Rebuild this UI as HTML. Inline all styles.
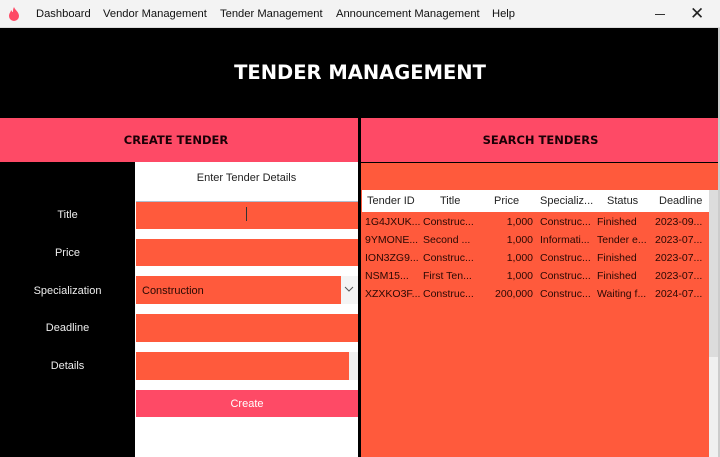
<!DOCTYPE html>
<html><head><style>
*{margin:0;padding:0;box-sizing:border-box}
body{width:720px;height:457px;position:relative;overflow:hidden;background:#000;font-family:"Liberation Sans",sans-serif;font-size:11px}
.a{position:absolute}
.or{background:#ff5a3c}
.pk{background:#fe4a66}
.lbl{position:absolute;left:0;width:135px;text-align:center;color:#eee;font-size:11px}
.row{position:absolute;left:362px;height:18px;width:347px;font-size:10.5px;color:#2a0803}
.row span,.hd span{position:absolute;top:3px;white-space:nowrap;overflow:hidden}
.hd span{color:#222;top:5px}
.m{position:absolute;top:8px;font-size:11.2px;color:#111}
</style></head><body>
<div class="a" style="left:0;top:0;width:720px;height:28px;background:#f3f3f3;border-bottom:1px solid #ddd"></div>
<svg class="a" style="left:7px;top:6px" width="14" height="16" viewBox="0 0 14 16"><path d="M7 1C8 4 12 6 12 10A5 5 0 0 1 2 10C2 7 4 6 4 4C5 5 5 6 6 6C6 4 6 3 7 1Z" fill="#fe4a66"/></svg>
<div class="m" style="left:36px">Dashboard</div>
<div class="m" style="left:103px">Vendor Management</div>
<div class="m" style="left:220px">Tender Management</div>
<div class="m" style="left:336px">Announcement Management</div>
<div class="m" style="left:492px">Help</div>
<div class="a" style="left:655px;top:14px;width:10px;height:1px;background:#333"></div>
<div class="a" style="left:690px;top:4px;font-size:17px;color:#222">✕</div>
<div class="a" style="left:0;top:61px;width:720px;text-align:center;color:#fff;font-size:19.5px;font-weight:bold;font-family:'DejaVu Sans',sans-serif">TENDER MANAGEMENT</div>
<div class="a pk" style="left:0;top:118px;width:358px;height:44px"></div>
<div class="a pk" style="left:361px;top:118px;width:359px;height:44px"></div>
<div class="a" style="left:0;top:133px;width:352px;text-align:center;font-weight:bold;font-size:11.5px;color:#1a0006;font-family:'DejaVu Sans',sans-serif">CREATE TENDER</div>
<div class="a" style="left:361px;top:133px;width:359px;text-align:center;font-weight:bold;font-size:11.5px;color:#1a0006;font-family:'DejaVu Sans',sans-serif">SEARCH TENDERS</div>
<div class="a" style="left:135px;top:162px;width:223px;height:295px;background:#fff"></div>
<div class="a" style="left:135px;top:172px;width:223px;text-align:center;color:#222">Enter Tender Details</div>
<div class="a or" style="left:136px;top:201px;width:222px;height:28px;border-top:1px solid #b0bfd0"></div>
<div class="a" style="left:246px;top:207px;width:1px;height:14px;background:#333"></div>
<div class="a or" style="left:136px;top:239px;width:222px;height:27px"></div>
<div class="a or" style="left:136px;top:276px;width:205px;height:28px"></div>
<div class="a" style="left:341px;top:276px;width:17px;height:28px;background:#f4f4f4"></div>
<svg class="a" style="left:344px;top:286px" width="10" height="6" viewBox="0 0 10 6"><path d="M1 1L5 5L9 1" stroke="#555" fill="none"/></svg>
<div class="a" style="left:142px;top:285px;color:#2a0a04">Construction</div>
<div class="a or" style="left:136px;top:314px;width:222px;height:28px"></div>
<div class="a or" style="left:136px;top:352px;width:213px;height:28px"></div>
<div class="a" style="left:349px;top:352px;width:9px;height:28px;background:#f0f0f0"></div>
<div class="a pk" style="left:136px;top:390px;width:222px;height:27px;color:#fff;text-align:center;line-height:28px">Create</div>
<div class="lbl" style="top:209px">Title</div>
<div class="lbl" style="top:247px">Price</div>
<div class="lbl" style="top:285px">Specialization</div>
<div class="lbl" style="top:322px">Deadline</div>
<div class="lbl" style="top:360px">Details</div>
<div class="a or" style="left:361px;top:163px;width:359px;height:294px"></div>
<div class="a hd" style="left:362px;top:190px;width:347px;height:22px;background:#fff">
<span style="left:5px">Tender ID</span><span style="left:78px">Title</span><span style="left:132px">Price</span><span style="left:178px">Specializ...</span><span style="left:245px">Status</span><span style="left:297px">Deadline</span>
</div>
<div class="a" style="left:709px;top:190px;width:9px;height:167px;background:#dcdcdc"></div>
<div class="a" style="left:709px;top:357px;width:9px;height:100px;background:#f0f0f0"></div>
<div class="a" style="left:718px;top:28px;width:2px;height:429px;background:#ccc"></div>
<div class="row" style="top:213px"><span style="left:3px">1G4JXUK...</span><span style="left:61px">Construc...</span><span style="right:176px">1,000</span><span style="left:178px">Construc...</span><span style="left:235px">Finished</span><span style="left:293px">2023-09...</span></div>
<div class="row" style="top:231px"><span style="left:3px">9YMONE...</span><span style="left:61px">Second ...</span><span style="right:176px">1,000</span><span style="left:178px">Informati...</span><span style="left:235px">Tender e...</span><span style="left:293px">2023-07...</span></div>
<div class="row" style="top:249px"><span style="left:3px">ION3ZG9...</span><span style="left:61px">Construc...</span><span style="right:176px">1,000</span><span style="left:178px">Construc...</span><span style="left:235px">Finished</span><span style="left:293px">2023-07...</span></div>
<div class="row" style="top:267px"><span style="left:3px">NSM15...</span><span style="left:61px">First Ten...</span><span style="right:176px">1,000</span><span style="left:178px">Construc...</span><span style="left:235px">Finished</span><span style="left:293px">2023-07...</span></div>
<div class="row" style="top:285px"><span style="left:3px">XZXKO3F...</span><span style="left:61px">Construc...</span><span style="right:176px">200,000</span><span style="left:178px">Construc...</span><span style="left:235px">Waiting f...</span><span style="left:293px">2024-07...</span></div>
</body></html>
